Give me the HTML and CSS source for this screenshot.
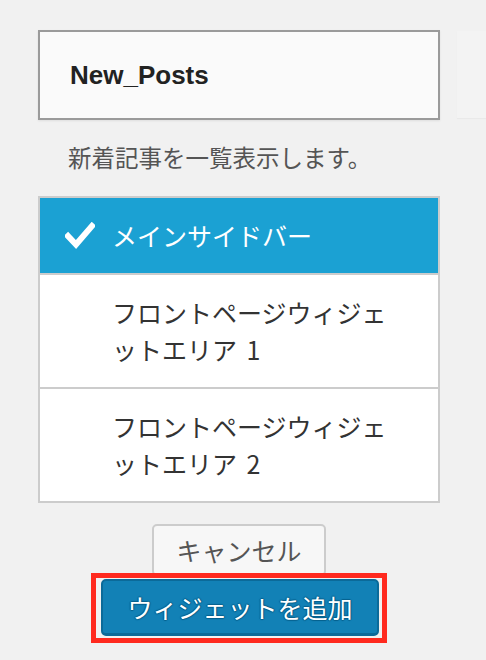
FILE: index.html
```html
<!DOCTYPE html>
<html lang="ja">
<head>
    <meta charset="UTF-8">
    <meta name="viewport" content="width=device-width, initial-scale=1.0">
    <title>ウィジェットを追加</title>
    <link rel="stylesheet" href="styles.css">
</head>
<body>
    <div class="page">
        <!-- Widget being added -->
        <div class="widget">
            <div class="widget-title">New_Posts</div>
            <p class="widget-desc">新着記事を一覧表示します。</p>

            <!-- Sidebar chooser -->
            <ul class="sidebar-list">
                <li class="sidebar-item selected">
                    <span class="check">
                        <svg width="30" height="27" viewBox="0 0 30 27">
                            <path d="M3 14 L11 22.5 L27 4" fill="none" stroke="#fff" stroke-width="6" stroke-linecap="square" stroke-linejoin="miter"/>
                        </svg>
                    </span>
                    <span class="item-name">メインサイドバー</span>
                </li>
                <li class="sidebar-item">
                    <span class="check"></span>
                    <span class="item-name">フロントページウィジェットエリア 1</span>
                </li>
                <li class="sidebar-item">
                    <span class="check"></span>
                    <span class="item-name">フロントページウィジェットエリア 2</span>
                </li>
            </ul>

            <div class="actions">
                <button class="btn-cancel">キャンセル</button>
                <!-- highlighted add button -->
                <div class="highlight">
                    <button class="btn-add">ウィジェットを追加</button>
                </div>
            </div>
        </div>

        <!-- next widget in the column (faded) -->
        <div class="widget-next"></div>
    </div>
</body>
</html>
```

FILE: styles.css
```css
body {
    margin: 0;
    padding: 0;
    background-color: #f1f1f1;
    font-family: "Liberation Sans", "Noto Sans CJK JP", sans-serif;
    overflow: hidden;
}

.page {
    display: flex;
    align-items: flex-start;
    gap: 17px;
    padding: 30px 0 0 38px;
}

.widget {
    width: 402px;
    flex-shrink: 0;
}

.widget-title {
    height: 86px;
    display: flex;
    align-items: center;
    padding-left: 30px;
    background-color: #fafafa;
    border: 2px solid #9a9a9a;
    box-shadow: 0 1px 2px rgba(0, 0, 0, 0.08);
    font-size: 26px;
    font-weight: bold;
    color: #222;
}

.widget-desc {
    margin: 0;
    padding: 20px 0 22px 30px;
    font-family: "Noto Sans CJK JP", sans-serif;
    font-size: 23.5px;
    line-height: 34px;
    color: #555;
}

/* Sidebar list */
.sidebar-list {
    list-style: none;
    margin: 0;
    padding: 0;
    background-color: #fff;
    border: 2px solid #ccc;
}

.sidebar-item {
    display: flex;
    padding: 19px 30px 19px 25px;
    font-family: "Noto Sans CJK JP", sans-serif;
    font-size: 25px;
    line-height: 37px;
    color: #333;
}

.sidebar-item + .sidebar-item {
    border-top: 2px solid #ccc;
}

.sidebar-item.selected {
    background-color: #1ba1d3;
    color: #fff;
}

.check {
    width: 47px;
    flex-shrink: 0;
    display: flex;
    align-items: center;
}

.item-name {
    width: 290px;
    word-spacing: 4px;
}

/* Buttons */
.actions {
    display: flex;
    flex-direction: column;
    align-items: center;
    padding-top: 21px;
}

.btn-cancel {
    height: 52px;
    padding: 0 22px;
    background-color: #f7f7f7;
    border: 2px solid #ccc;
    border-radius: 5px;
    font-family: "Noto Sans CJK JP", sans-serif;
    font-size: 25px;
    color: #555;
    cursor: pointer;
}

.highlight {
    position: relative; /* sits over the bottom of the cancel button */
    margin-top: -3px;
    padding: 1px 3px 2px 5px;
    border: 5px solid #ff2a1f;
}

.btn-add {
    display: block;
    height: 57px;
    padding: 0 24px;
    background-color: #1281b6;
    border: 2px solid #0b6a99;
    border-bottom-width: 3px;
    border-radius: 5px;
    font-family: "Noto Sans CJK JP", sans-serif;
    font-size: 25px;
    color: #fff;
    text-shadow: 0 -1px 1px #06608c, 1px 0 1px #06608c, 0 1px 1px #06608c, -1px 0 1px #06608c;
    cursor: pointer;
}

.widget-next {
    flex: 1;
    min-width: 0;
    height: 87px;
    margin-top: 1px;
    background-color: #f3f3f3;
    box-shadow: 0 1px 1px rgba(0, 0, 0, 0.03);
}
```
